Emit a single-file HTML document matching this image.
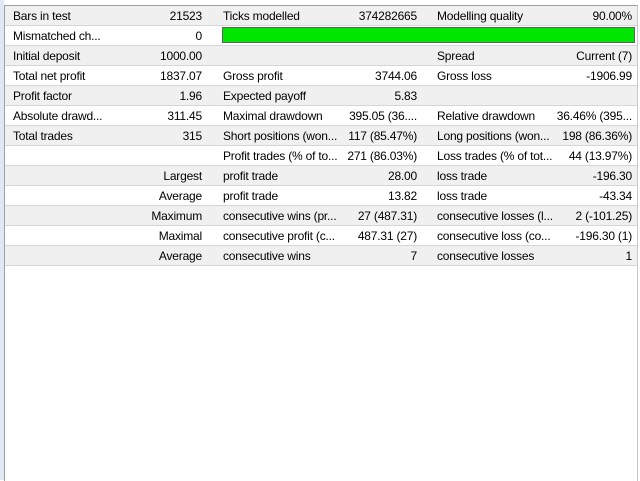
<!DOCTYPE html><html><head><style>
body{margin:0;width:640px;height:480px;background:#fff;position:relative;overflow:hidden;font-family:"Liberation Sans",sans-serif;font-size:12px;letter-spacing:-0.2px;color:#000}
#strip{position:absolute;left:0;top:0;width:4px;height:480px;background:#dfe8f3}
#frame{position:absolute;left:4px;top:5px;width:632px;height:475px;border-left:1px solid #a0a0a0;border-top:1px solid #a0a0a0;border-right:1px solid #c8c8c8}
.r{position:absolute;left:5px;width:632px;height:19px;border-bottom:1px solid #d6d6d6}
.g{background:#f0f0f0}
.r span{position:absolute;top:3px;white-space:nowrap}
.a{left:8px}.b{right:435px}.c{left:218px}.d{right:220px}.e{left:432px}.f{right:5px}
#bar{position:absolute;left:222px;top:27px;width:411px;height:14px;background:#00e600;border:1px solid #606060}
</style></head><body>
<div id="strip"></div><div id="frame"></div>
<div class="r g" style="top:6px"><span class="a">Bars in test</span><span class="b">21523</span><span class="c">Ticks modelled</span><span class="d">374282665</span><span class="e">Modelling quality</span><span class="f">90.00%</span></div>
<div class="r" style="top:26px"><span class="a">Mismatched ch...</span><span class="b">0</span></div>
<div id="bar"></div>
<div class="r g" style="top:46px"><span class="a">Initial deposit</span><span class="b">1000.00</span><span class="e">Spread</span><span class="f">Current (7)</span></div>
<div class="r" style="top:66px"><span class="a">Total net profit</span><span class="b">1837.07</span><span class="c">Gross profit</span><span class="d">3744.06</span><span class="e">Gross loss</span><span class="f">-1906.99</span></div>
<div class="r g" style="top:86px"><span class="a">Profit factor</span><span class="b">1.96</span><span class="c">Expected payoff</span><span class="d">5.83</span></div>
<div class="r" style="top:106px"><span class="a">Absolute drawd...</span><span class="b">311.45</span><span class="c">Maximal drawdown</span><span class="d">395.05 (36....</span><span class="e">Relative drawdown</span><span class="f">36.46% (395...</span></div>
<div class="r g" style="top:126px"><span class="a">Total trades</span><span class="b">315</span><span class="c">Short positions (won...</span><span class="d">117 (85.47%)</span><span class="e">Long positions (won...</span><span class="f">198 (86.36%)</span></div>
<div class="r" style="top:146px"><span class="c">Profit trades (% of to...</span><span class="d">271 (86.03%)</span><span class="e">Loss trades (% of tot...</span><span class="f">44 (13.97%)</span></div>
<div class="r g" style="top:166px"><span class="b">Largest</span><span class="c">profit trade</span><span class="d">28.00</span><span class="e">loss trade</span><span class="f">-196.30</span></div>
<div class="r" style="top:186px"><span class="b">Average</span><span class="c">profit trade</span><span class="d">13.82</span><span class="e">loss trade</span><span class="f">-43.34</span></div>
<div class="r g" style="top:206px"><span class="b">Maximum</span><span class="c">consecutive wins (pr...</span><span class="d">27 (487.31)</span><span class="e">consecutive losses (l...</span><span class="f">2 (-101.25)</span></div>
<div class="r" style="top:226px"><span class="b">Maximal</span><span class="c">consecutive profit (c...</span><span class="d">487.31 (27)</span><span class="e">consecutive loss (co...</span><span class="f">-196.30 (1)</span></div>
<div class="r g" style="top:246px"><span class="b">Average</span><span class="c">consecutive wins</span><span class="d">7</span><span class="e">consecutive losses</span><span class="f">1</span></div>
</body></html>
